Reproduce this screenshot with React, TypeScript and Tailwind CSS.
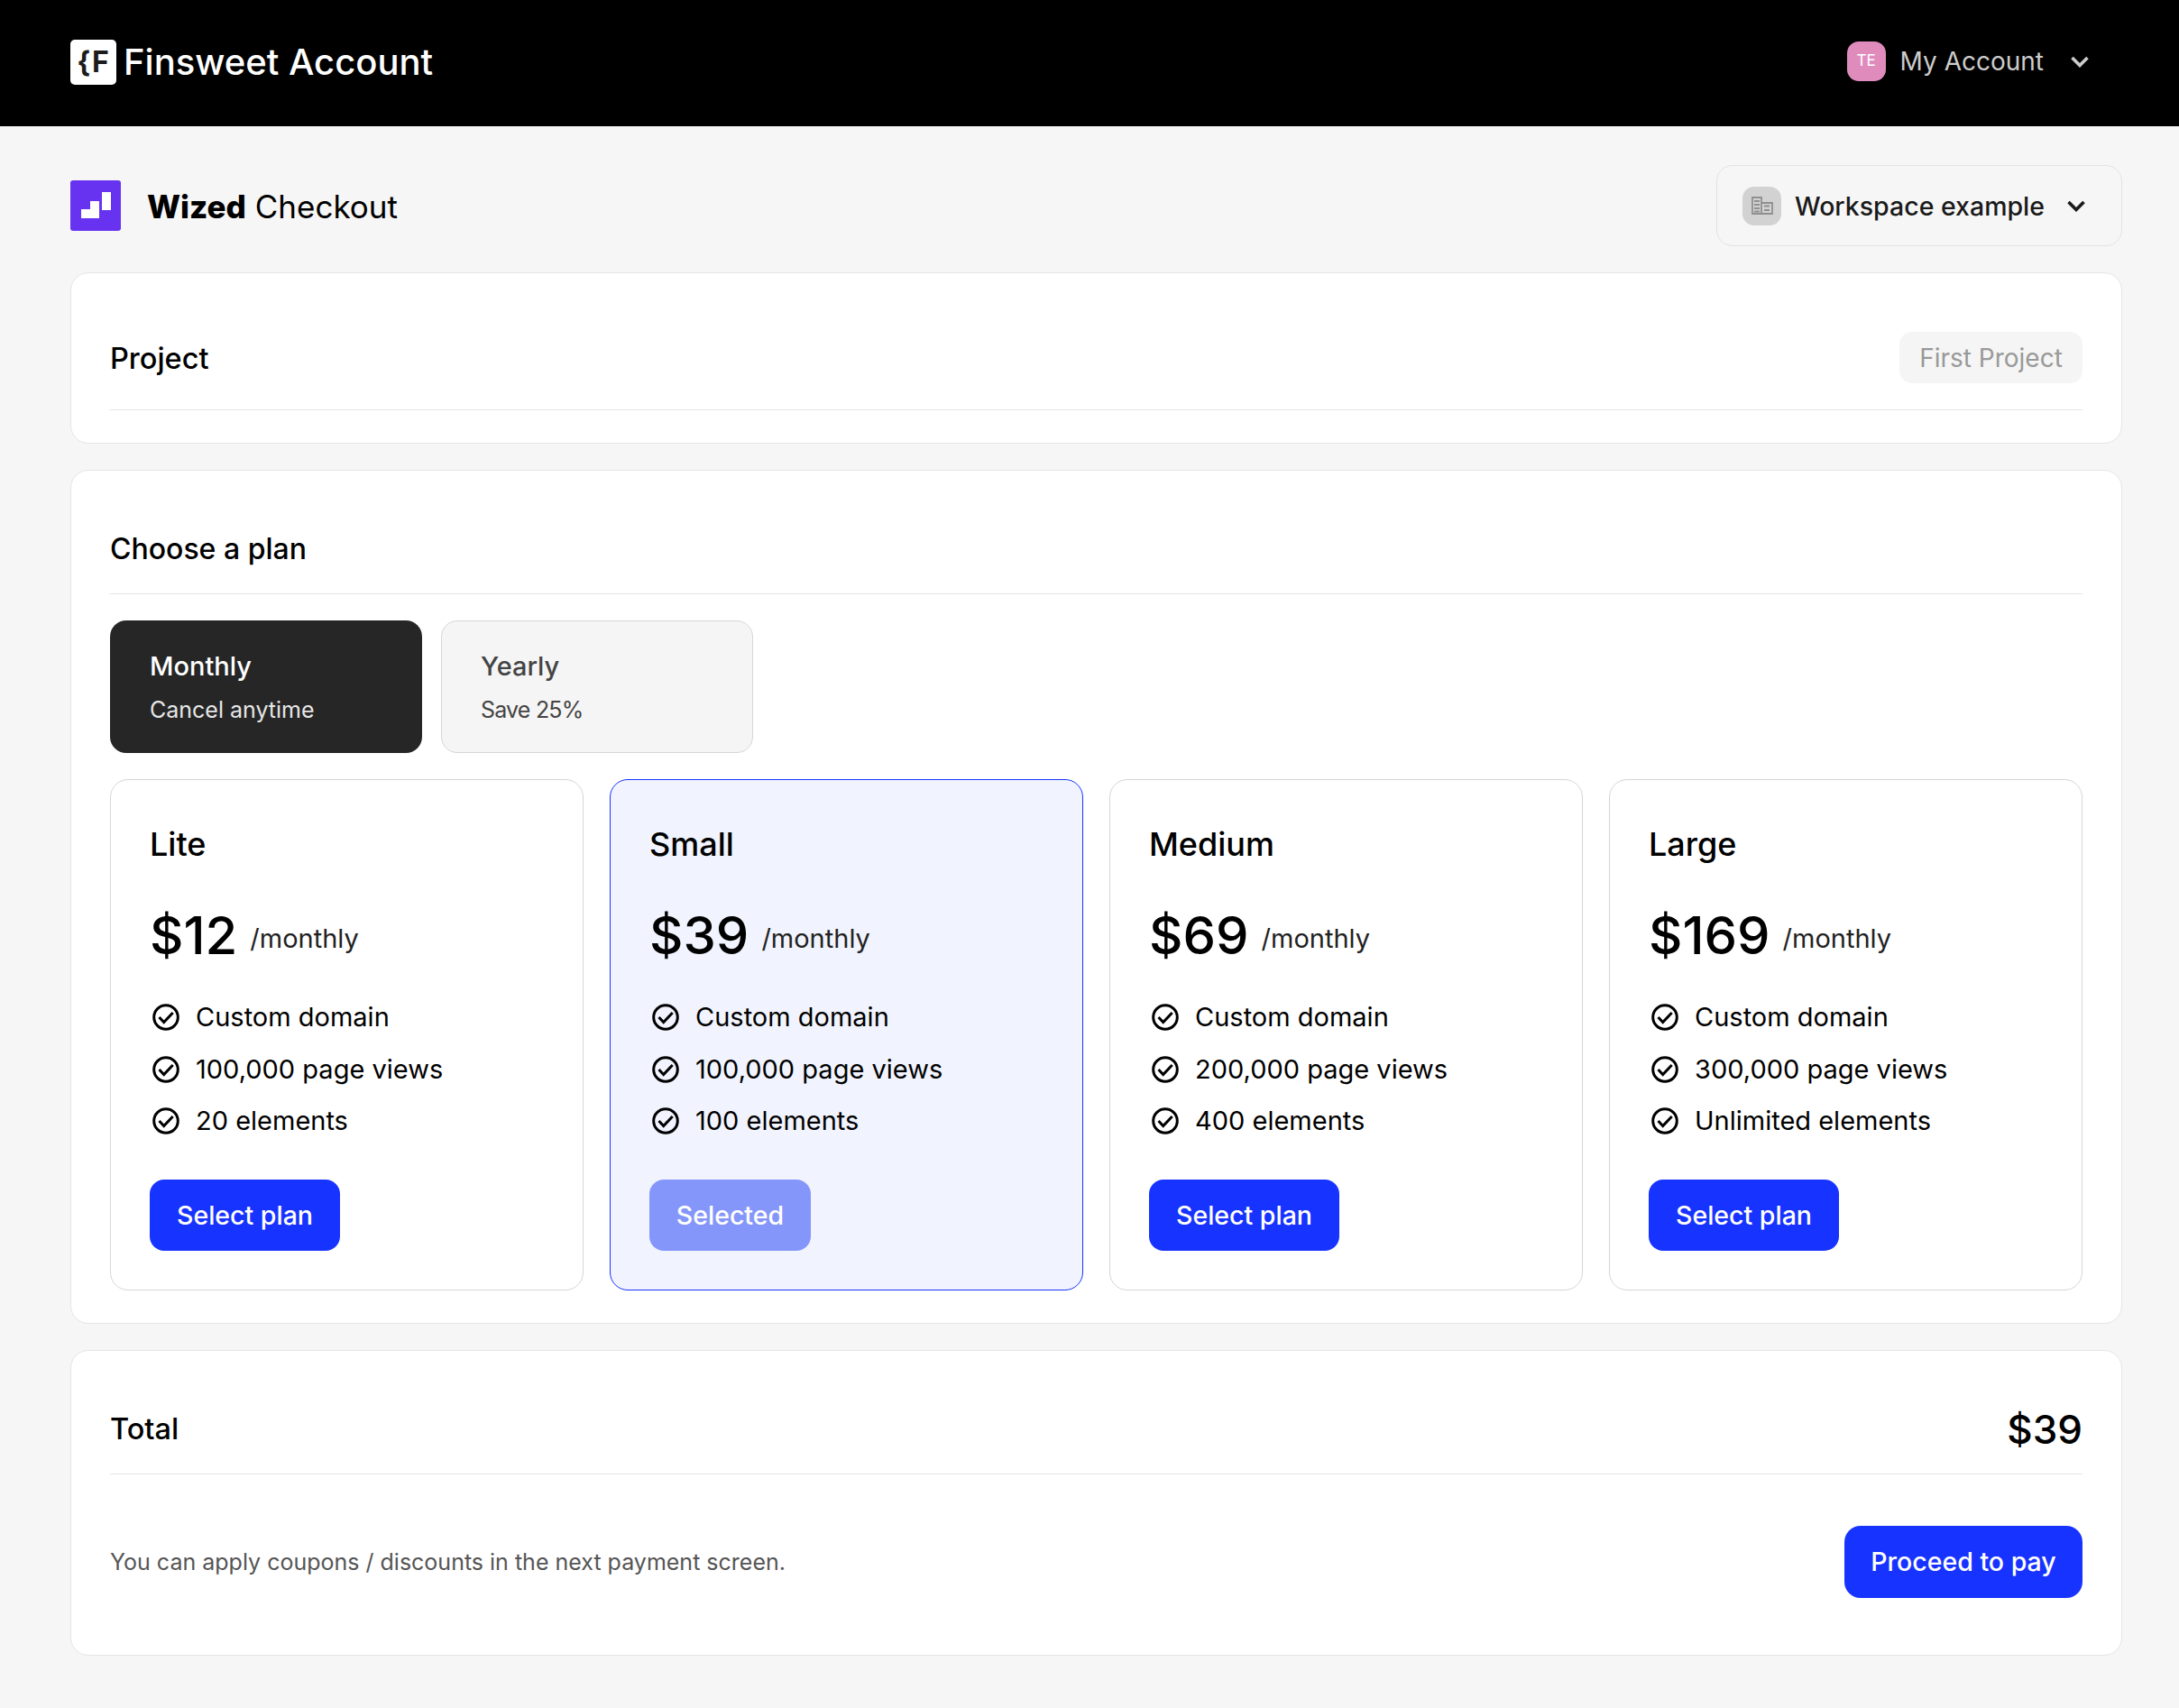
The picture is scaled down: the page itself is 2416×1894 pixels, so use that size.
const plans = [
  { name: 'Lite', price: '$12', features: ['Custom domain', '100,000 page views', '20 elements'] },
  { name: 'Small', price: '$39', features: ['Custom domain', '100,000 page views', '100 elements'], selected: true },
  { name: 'Medium', price: '$69', features: ['Custom domain', '200,000 page views', '400 elements'] },
  { name: 'Large', price: '$169', features: ['Custom domain', '300,000 page views', 'Unlimited elements'] },
]

function Chevron({ className }: { className: string }) {
  return (
    <svg viewBox="0 0 20 13" fill="none" className={className}>
      <path d="M1.5 2l8.5 8.5L18.5 2" stroke="currentColor" strokeWidth="3.6" />
    </svg>
  )
}

function Check() {
  return (
    <svg viewBox="0 0 30 30" fill="none" className="w-[30px] h-[30px] shrink-0 ml-[3px]">
      <circle cx="15" cy="15" r="13.3" stroke="#000" strokeWidth="3" />
      <path d="M7.5 15l5.2 5.5L22.7 10" stroke="#000" strokeWidth="3" />
    </svg>
  )
}

function PlanCard({ plan }: { plan: (typeof plans)[number] }) {
  return (
    <div
      className={`rounded-[20px] border pl-[43px] pr-[20px] pt-[49px] pb-[43px] ${
        plan.selected ? 'bg-[#f1f4fe] border-[#1733ff]' : 'bg-white border-[#d6d6d6]'
      }`}
    >
      <div className="text-[36px] leading-[44px] font-medium text-black">{plan.name}</div>
      <div className="mt-[43px] flex items-center gap-[14px] h-[72px]">
        <span className="text-[58px] leading-[72px] font-medium text-black">{plan.price}</span>
        <span className="mt-[8px] text-[29px] text-[#222]">/monthly</span>
      </div>
      <div className="mt-[35px] flex flex-col gap-[17.5px]">
        {plan.features.map((f) => (
          <div key={f} className="flex items-center gap-[18px] h-[40px] text-[29px] text-black">
            <Check />
            {f}
          </div>
        ))}
      </div>
      {plan.selected ? (
        <button className="mt-[45px] pt-[2px] w-[179px] h-[79px] rounded-[16px] bg-[#8596fb] text-white text-[28.5px] font-medium">
          Selected
        </button>
      ) : (
        <button className="mt-[45px] pt-[2px] w-[211px] h-[79px] rounded-[16px] bg-[#1733ff] text-white text-[28.5px] font-medium">
          Select plan
        </button>
      )}
    </div>
  )
}

export default function App() {
  return (
    <div className="min-h-[1894px] bg-[#f6f6f6] font-[Inter,sans-serif]">
      {/* Top bar */}
      <header className="h-[140px] bg-black flex items-center justify-between pl-[78px] pr-[100px]">
        <div className="flex items-center gap-[8px]">
          <div className="mb-[2px] w-[51px] h-[50px] rounded-[5px] bg-white flex items-center justify-center text-[#1c1c1c] text-[32px] leading-none font-bold tracking-[1px]">
            {'{F'}
          </div>
          <span className="mb-[2px] text-[40px] font-medium text-white">Finsweet Account</span>
        </div>
        <div className="flex items-center mb-[4px]">
          <div className="w-[43px] h-[44px] rounded-[13px] bg-[#df8cbd] flex items-center justify-center text-white text-[17px]">
            TE
          </div>
          <span className="ml-[16px] text-[28px] text-[#cccccc]">My Account</span>
          <Chevron className="ml-[30px] w-[20px] h-[13px] text-[#cccccc]" />
        </div>
      </header>

      <main className="pl-[78px] pr-[63px] pt-[43px] flex flex-col gap-[29px]">
        {/* Title row */}
        <div className="flex items-center justify-between h-[90px]">
          <div className="flex items-center gap-[29px]">
            <svg viewBox="0 0 56 56" className="w-[56px] h-[56px]">
              <rect width="56" height="56" rx="3" fill="#6733f0" />
              <path d="M12 32h10v-9h10v19H12z" fill="#fff" />
              <rect x="35" y="13" width="10" height="20" fill="#fff" />
            </svg>
            <span className="mt-[2px] text-[35px] text-black">
              <b className="font-extrabold">Wized</b> Checkout
            </span>
          </div>
          <div className="w-[450px] h-[90px] rounded-[18px] border border-[#e3e3e3] flex items-center pl-[28px]">
            <div className="w-[43px] h-[43px] rounded-[13px] bg-[#d2d2d2] flex items-center justify-center">
              <svg viewBox="0 0 24 20" className="w-[24px] h-[20px]" fill="none">
                <path d="M1 1h10v18H1zM11 7h12v12H11z" stroke="#8f8f8f" strokeWidth="1.8" />
                <path d="M3 5h6M3 9h6M3 13h6M3 16.5h6M14 10.5h6M14 15h6" stroke="#8f8f8f" strokeWidth="2" />
              </svg>
            </div>
            <span className="ml-[15px] mt-[2px] text-[28.5px] font-medium text-[#1a1a1a]">Workspace example</span>
            <Chevron className="ml-[25px] w-[20px] h-[13px] text-[#1a1a1a]" />
          </div>
        </div>

        {/* Project */}
        <section className="bg-white rounded-[20px] border border-[#e5e5e5] px-[43px] pt-[65px] pb-[36px]">
          <div className="flex items-center justify-between border-b border-[#e3e3e3] pb-[29px]">
            <h2 className="mt-[4px] text-[32.5px] font-medium text-black">Project</h2>
            <div className="w-[203px] h-[57px] rounded-[14px] bg-[#f5f5f5] flex items-center justify-center text-[28px] text-[#999999]">
              First Project
            </div>
          </div>
        </section>

        {/* Plans */}
        <section className="bg-white rounded-[20px] border border-[#e5e5e5] px-[43px] pt-[67px] pb-[36px]">
          <div className="border-b border-[#e3e3e3] pb-[29px]">
            <h2 className="text-[32px] leading-[40px] font-medium text-black">Choose a plan</h2>
          </div>
          <div className="mt-[29px] flex gap-[21px]">
            <div className="w-[346px] h-[147px] rounded-[18px] bg-[#262626] pl-[44px] pt-[31px]">
              <div className="text-[29px] leading-[40px] font-medium text-white">Monthly</div>
              <div className="mt-[10px] text-[25px] leading-[36px] text-[#e6e6e6]">Cancel anytime</div>
            </div>
            <div className="w-[346px] h-[147px] rounded-[18px] bg-[#f5f5f5] border border-[#d6d6d6] pl-[43px] pt-[30px]">
              <div className="text-[29px] leading-[40px] font-medium text-[#444]">Yearly</div>
              <div className="mt-[10px] text-[25px] leading-[36px] tracking-[-0.8px] text-[#444]">Save 25%</div>
            </div>
          </div>
          <div className="mt-[29px] grid grid-cols-4 gap-[29px]">
            {plans.map((p) => (
              <PlanCard key={p.name} plan={p} />
            ))}
          </div>
        </section>

        {/* Total */}
        <section className="bg-white rounded-[20px] border border-[#e5e5e5] px-[43px] pt-[57px] pb-[63px]">
          <div className="flex items-center justify-between border-b border-[#e3e3e3] pb-[19px]">
            <h2 className="text-[32.5px] font-medium text-black">Total</h2>
            <span className="text-[44px] leading-[60px] font-medium text-black">$39</span>
          </div>
          <div className="mt-[57px] flex items-center justify-between">
            <p className="mt-[2px] text-[25px] text-[#555]">You can apply coupons / discounts in the next payment screen.</p>
            <button className="w-[264px] h-[80px] rounded-[18px] bg-[#1733ff] text-white text-[28.5px] font-medium">
              Proceed to pay
            </button>
          </div>
        </section>
      </main>
    </div>
  )
}
